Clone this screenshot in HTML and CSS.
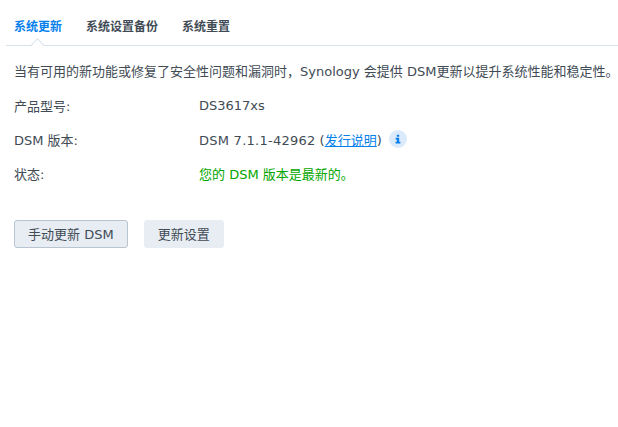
FILE: index.html
```html
<!DOCTYPE html>
<html lang="zh-CN">
<head>
  <meta charset="UTF-8">
  <title>系统更新</title>
  <link rel="stylesheet" href="styles.css">
</head>
<body>
  <div class="tabs">
    <span class="tab active">系统更新</span>
    <span class="tab">系统设置备份</span>
    <span class="tab">系统重置</span>
    <span class="notch"></span>
  </div>

  <div class="content">
    <p class="intro">当有可用的新功能或修复了安全性问题和漏洞时，Synology 会提供 DSM更新以提升系统性能和稳定性。</p>

    <div class="row">
      <span class="label">产品型号:</span>
      <span>DS3617xs</span>
    </div>
    <div class="row">
      <span class="label">DSM 版本:</span>
      <span><span class="version">DSM 7.1.1-42962</span> (<a href="#">发行说明</a>)</span>
      <span class="info">
        <svg width="8" height="10" viewBox="0 0 8 10"><path fill="#057feb" d="M2.8 0.8h2.4v2h-2.4zM1.6 3.8h3.6v4h1.2v1.6h-4.8v-1.6h1.2v-2.4h-1.2z"/></svg>
      </span>
    </div>
    <div class="row">
      <span class="label">状态:</span>
      <span class="ok">您的 DSM 版本是最新的。</span>
    </div>

    <div class="buttons">
      <button class="btn outlined">手动更新 DSM</button>
      <button class="btn">更新设置</button>
    </div>
  </div>
</body>
</html>
```

FILE: styles.css
```css
body {
  margin: 0;
  background: #fff;
  color: #414b55;
  font-family: "DejaVu Sans", "Noto Sans CJK SC", sans-serif;
  font-size: 13px;
}
.tabs {
  position: relative;
  display: flex;
  gap: 24px;
  height: 45px;
  margin-left: 6px;
  padding-left: 8px;
  border-bottom: 1px solid #d7e1eb;
  box-sizing: content-box;
}
.tab {
  font-size: 12px;
  font-weight: bold;
  line-height: 54px;
  height: 45px;
  color: #414b55;
}
.tab.active {
  color: #057feb;
}
.notch {
  position: absolute;
  left: 27px;
  top: 40px;
  width: 8px;
  height: 8px;
  background: #fff;
  border-left: 1px solid #d7e1eb;
  border-top: 1px solid #d7e1eb;
  transform: rotate(45deg);
}
.content {
  padding: 0 14px;
}
.intro {
  margin: 0;
  padding-top: 16px;
  line-height: 20px;
  white-space: nowrap;
}
.row {
  display: flex;
  align-items: center;
  height: 20px;
  margin-top: 14px;
  white-space: pre;
}
.intro + .row {
  margin-top: 13px;
}
.label {
  width: 185px;
}
.version {
  letter-spacing: 0.25px;
}
a {
  color: #057feb;
}
.info {
  display: flex;
  align-items: center;
  justify-content: center;
  width: 18px;
  height: 18px;
  margin-left: 7px;
  border-radius: 50%;
  background: #dcebfb;
}
.ok {
  color: #03a600;
}
.buttons {
  display: flex;
  gap: 16px;
  margin-top: 37px;
}
.btn {
  height: 28px;
  padding: 0 13px 2px;
  border: 1px solid #e8edf4;
  border-radius: 3px;
  background: #e8edf4;
  color: #414b55;
  font-family: inherit;
  font-size: 13px;
}
.btn.outlined {
  border-color: #b9c4d1;
}
```
